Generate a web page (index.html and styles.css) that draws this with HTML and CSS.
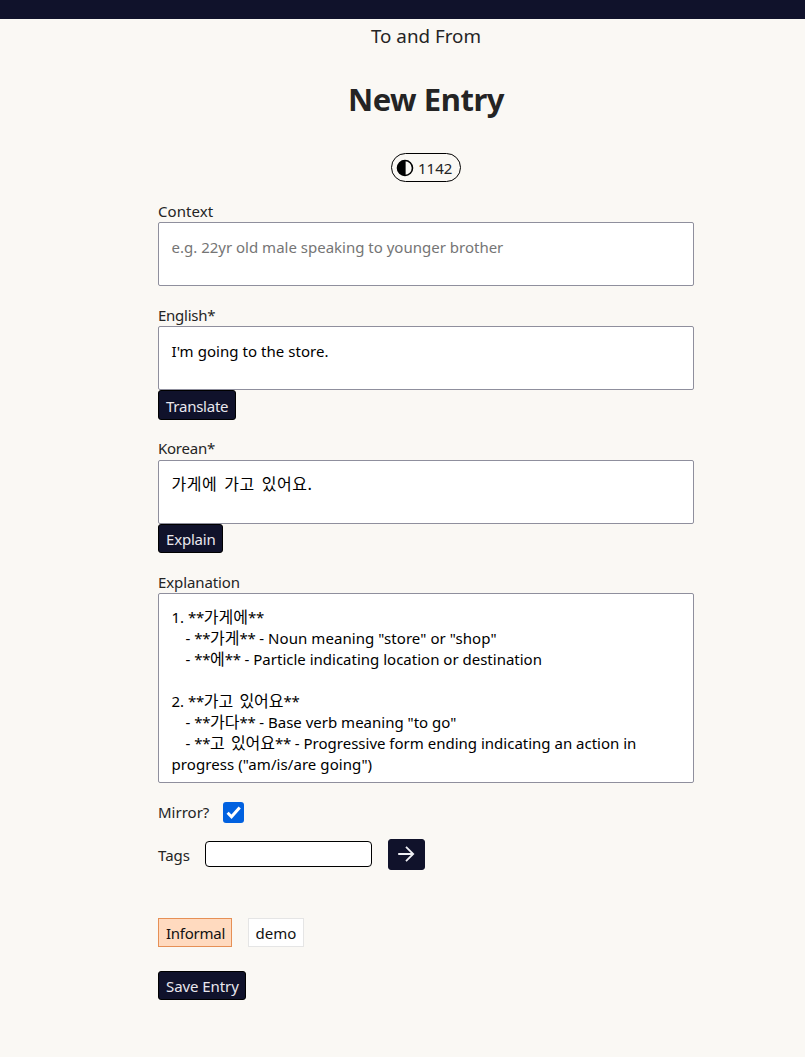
FILE: index.html
```
<!DOCTYPE html>
<html lang="en">
<head>
<meta charset="utf-8">
<title>New Entry</title>
<link rel="stylesheet" href="styles.css">
</head>
<body>
<div class="topbar"></div>
<main class="page">
  <header class="head">
    <div class="brand"><span>To and From</span></div>
    <h1 class="title"><span>New Entry</span></h1>
    <div class="credits">
      <svg width="18" height="18" viewBox="0 0 18 18"><circle cx="9" cy="9" r="7.5" fill="none" stroke="#000" stroke-width="1.6"/><path d="M9.6 1.5H9a7.5 7.5 0 0 0 0 15h.6z" fill="#000"/></svg>
      <span class="amount">1142</span>
    </div>
  </header>
  <section class="field">
    <div class="label"><span class="l-context">Context</span></div>
    <div class="area placeholder"><span class="t-hint">e.g. 22yr old male speaking to younger brother</span></div>
  </section>
  <section class="field">
    <div class="label"><span class="l-starred">English*</span></div>
    <div class="area"><span class="t-store">I'm going to the store.</span></div>
    <button class="btn btn-translate"><span>Translate</span></button>
  </section>
  <section class="field field-korean">
    <div class="label"><span class="l-starred">Korean*</span></div>
    <div class="area area-korean"><span class="ko ko-wide">가게에 가고 있어요.</span></div>
    <button class="btn btn-explain"><span>Explain</span></button>
  </section>
  <section class="field">
    <div class="label"><span class="l-explanation">Explanation</span></div>
    <div class="area tall">
      <div class="line"><span>1. <i>**</i><b class="ko">가게에</b><i>**</i></span></div>
      <div class="line indent"><span>- <i>**</i><b class="ko">가게</b><i>**</i> - <span class="e-noun">Noun meaning "store" or "shop"</span></span></div>
      <div class="line indent"><span>- <i>**</i><b class="ko">에</b><i>**</i> - Particle indicating location or destination</span></div>
      <div class="line"></div>
      <div class="line"><span>2. <i>**</i><b class="ko">가고 있어요</b><i>**</i></span></div>
      <div class="line indent"><span>- <i>**</i><b class="ko">가다</b><i>**</i> - Base verb meaning "to go"</span></div>
      <div class="line indent"><span>- <i>**</i><b class="ko">고 있어요</b><i>**</i> - Progressive form ending indicating an action in</span></div>
      <div class="line"><span class="e-noun">progress ("am/is/are going")</span></div>
    </div>
  </section>
  <div class="mirror">
    <span class="mirror-label">Mirror?</span>
    <span class="check"><svg width="21" height="21" viewBox="0 0 21 21"><path d="M4.6 10.8l3.9 4 8.2-9.4" fill="none" stroke="#fff" stroke-width="3"/></svg></span>
  </div>
  <div class="tags">
    <span class="tags-label">Tags</span>
    <input class="tag-input" type="text">
    <button class="btn btn-arrow"><svg width="18" height="18" viewBox="0 0 18 18"><path d="M1.2 9h15M9 1.8L16.2 9 9 16.2" fill="none" stroke="#f0f0f5" stroke-width="1.8"/></svg></button>
  </div>
  <div class="chips">
    <span class="chip chip-on"><span>Informal</span></span>
    <span class="chip chip-demo"><span>demo</span></span>
  </div>
  <button class="btn btn-save"><span>Save Entry</span></button>
</main>
</body>
</html>
```
FILE: styles.css
```
* { box-sizing: border-box; }
body {
  margin: 0;
  min-height: 1057px;
  background: #faf8f4;
  color: #242424;
  font: 15px/21px "Noto Sans", "Noto Sans CJK KR", sans-serif;
}
.topbar { height: 19px; background: #10122b; }
.page { width: 536px; margin-left: 158px; }
.head { display: flex; flex-direction: column; align-items: center; }
.brand { height: 34px; font-size: 18.8px; line-height: 34px; }
.title { margin: 25px 0 32px; height: 43px; font-size: 31px; line-height: 43px; font-weight: 700; letter-spacing: -.45px; }
.credits {
  display: flex;
  align-items: center;
  gap: 4px;
  width: 70px;
  height: 29px;
  padding-left: 4px;
  border: 1px solid #000;
  border-radius: 15px;
}
.amount { padding-top: 2px; }
.field { margin-top: 18px; }
.label { height: 22px; line-height: 22px; white-space: nowrap; }
.l-context { letter-spacing: .05px; }
.l-starred { letter-spacing: -.25px; }
.l-explanation { letter-spacing: -.1px; }
.area {
  height: 64px;
  padding: 14px 12.5px 0;
  border: 1px solid #8f8f9d;
  border-radius: 2px;
  background: #fff;
  color: #000;
  white-space: nowrap;
}
.area-korean { padding-top: 13px; }
.placeholder { color: #757575; }
.t-store { letter-spacing: .05px; }
.tall { height: 190px; padding-top: 13px; }
.line { height: 21px; }
.line i { font-style: normal; letter-spacing: -.35px; }
.indent { padding-left: 14px; }
.e-noun { letter-spacing: .07px; }
.ko {
  font-family: "Noto Sans CJK KR", sans-serif;
  font-size: 16px;
  line-height: 1;
  font-weight: 400;
  word-spacing: 2.5px;
}
.ko-wide { letter-spacing: .5px; word-spacing: 3px; }
.btn {
  display: flex;
  align-items: center;
  height: 29px;
  padding: 2px 0 0 7px;
  border: 1px solid #000;
  border-radius: 3px;
  background: #10122b;
  color: #e9e7ee;
  font: inherit;
  white-space: nowrap;
}
.btn-translate { width: 78px; height: 30px; letter-spacing: -.25px; }
.btn-explain { width: 65px; letter-spacing: -.2px; }
.btn-save { width: 88px; margin-top: 24px; letter-spacing: -.08px; }
.field-korean { margin-top: 17px; }
.field-korean .label { height: 23px; }
.mirror { display: flex; align-items: center; height: 21px; margin-top: 19px; }
.mirror-label { width: 65px; }
.check { width: 21px; height: 21px; border-radius: 3px; background: #0061e0; }
.check svg { display: block; }
.tags { display: flex; align-items: center; height: 31px; margin-top: 16px; }
.tags-label { width: 47px; padding-top: 2px; }
.tag-input { width: 167px; height: 26px; margin-bottom: 2px; border: 1px solid #000; border-radius: 4px; background: #fff; }
.btn-arrow { width: 37px; height: 31px; margin-left: 16px; padding: 0 2px 2px 0; justify-content: center; border-color: #10122b; }
.chips { display: flex; gap: 16px; margin-top: 48px; }
.chip { display: flex; align-items: center; height: 29px; padding: 2px 0 0 7px; border: 1px solid #e5e5e5; background: #fff; color: #111; }
.chip-on { width: 74px; border-color: #e69056; background: #ffdabf; letter-spacing: -.25px; }
.chip-demo { width: 56px; padding-left: 6.5px; }
```
